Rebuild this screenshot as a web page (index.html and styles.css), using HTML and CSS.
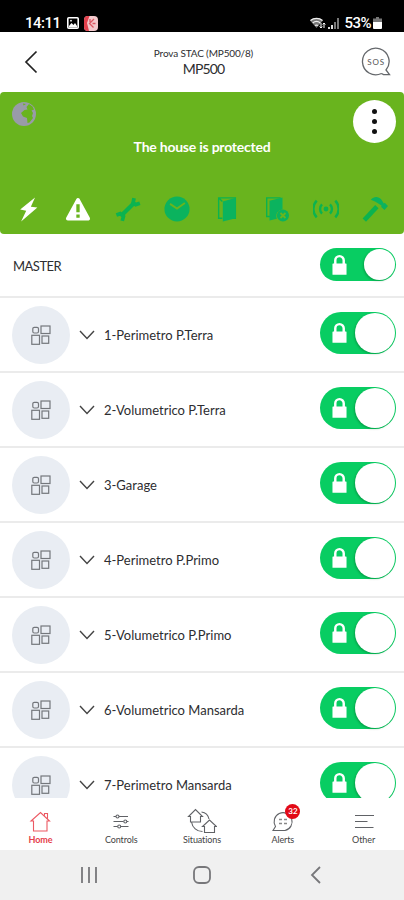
FILE: index.html
```html
<!DOCTYPE html>
<html lang="en">
<head>
  <meta charset="UTF-8" />
  <meta name="viewport" content="width=device-width, initial-scale=1.0"/>
  <title>MP500</title>
  <link rel="stylesheet" href="styles.css">
</head>
<body>

  <!-- shared icons -->
  <svg class="defs">
    <symbol id="lock" viewBox="0 0 16 22">
      <path d="M3.5 11V6a4.500 4.500 0 0 1 9 0V11" fill="none" stroke="#fff" stroke-width="2.6"/>
      <rect x="0.5" y="9.5" width="15" height="12" rx="0.5" fill="#fff"/>
    </symbol>
    <symbol id="area" viewBox="0 0 20 20">
      <g fill="none" stroke="#74777c" stroke-width="1.2">
        <rect x="1.8" y="2.300" width="5.700" height="5.700" rx="1.500"/>
        <rect x="10" y="1" width="9" height="7.5"/>
        <rect x="0.8" y="10.300" width="7.700" height="9"/>
        <rect x="11" y="11" width="6.700" height="7.300"/>
      </g>
    </symbol>
    <symbol id="down" viewBox="0 0 16 10">
      <path d="M1 1l7 7.5L15 1" fill="none" stroke="#444" stroke-width="1.4"/>
    </symbol>
  </svg>

  <div class="status">
    <span class="clock">14:11</span>
    <svg class="photo" width="12" height="12" viewBox="0 0 12 12">
      <rect x="0.8" y="0.8" width="10.4" height="10.4" rx="1" fill="none" stroke="#fff" stroke-width="1.6"/>
      <path d="M2 9l2.5-3 2 2 1.5-2L10 9v1.5H2z" fill="#fff"/>
      <circle cx="4" cy="3.7" r="0.9" fill="#fff"/>
    </svg>
    <svg width="14" height="15" viewBox="0 0 14 15">
      <rect width="14" height="15" rx="4" fill="#f3c9cc"/>
      <path d="M4 0h1.500L3 7l2 8H4a4 4 0 0 1-4-4V4a4 4 0 0 1 4-4z" fill="#e2414d"/>
      <path d="M10 3L5.500 7.500l4 4M8.500 7.500h3M6 3v3" stroke="#db5863" stroke-width="1.300" fill="none"/>
    </svg>
    <div class="status-right">
      <svg class="wifi" width="16" height="12" viewBox="0 0 16 12">
        <path d="M0 3.500a10 10 0 0 1 13 0L6.500 11z" fill="#777"/>
        <path d="M0.500 3.500a9.500 9.500 0 0 1 12 0M2.700 6a6 6 0 0 1 7.600 0M5 8.500a3 3 0 0 1 3 0" fill="none" stroke="#eee" stroke-width="1.300"/>
        <path d="M11 6v5M14 6v5M9.500 9.500L11 11l1.300-1.500M12.700 7.500L14 6l1.300 1.500" fill="none" stroke="#fff" stroke-width="1"/>
      </svg>
      <svg width="11" height="11" viewBox="0 0 11 11">
        <path d="M0 11v-2h2v2zM3 11V7h2v4z" fill="#ddd"/>
        <path d="M6 11V4h2v7zM9 11V0h2v11z" fill="#777"/>
      </svg>
      <span class="percent">53%</span>
      <svg class="battery" width="9" height="12" viewBox="0 0 9 12">
        <path d="M3 0h3v1.500h3V5H0V1.500h3z" fill="#777"/>
        <path d="M0 5h9v6a1 1 0 0 1-1 1H1a1 1 0 0 1-1-1z" fill="#fff"/>
      </svg>
    </div>
  </div>

  <header class="header">
    <svg class="back" width="14" height="24" viewBox="0 0 14 24">
      <path d="M12.500 1.500L2 12l10.500 10.500" fill="none" stroke="#222" stroke-width="1.700"/>
    </svg>
    <div class="title">
      <small>Prova STAC (MP500/8)</small>
      <span>MP500</span>
    </div>
    <svg class="sos" width="30" height="30" viewBox="0 0 30 30">
      <path d="M20.500 26.500A13.300 13.300 0 1 1 25 23L28.500 27.600H22.500L20.500 26.500" fill="none" stroke="#65686c" stroke-width="1.300"/>
      <text x="14.700" y="18" text-anchor="middle" textLength="17">SOS</text>
    </svg>
  </header>

  <section class="hero">
    <svg class="globe" width="26" height="26" viewBox="0 0 26 26">
      <circle cx="13" cy="13" r="12" fill="#999ba8"/>
      <path d="M10 12l3.500-3 3-.5-1-2.500 2.500-3 3.500 2.500 1.500 3-2.500 1 1.500 2.500-1 3 1 2-3.500 4.500-2 .5-.5-5-4-1.500z" fill="#69b41e"/>
      <path d="M12 2.500l3 .5-2.500 1.500z" fill="#69b41e"/>
    </svg>
    <div class="menu"><i></i><i></i><i></i></div>
    <div class="message">The house is protected</div>
    <div class="icons">
      <svg viewBox="0 0 28 28">
        <path d="M20.500 1.500L4.500 14.500l6.500 1.500L5.500 27.500 23 12.500l-7-1z" fill="#fff"/>
      </svg>
      <svg viewBox="0 0 28 28">
        <path d="M14 4.200L25 24.300H3z" fill="#fff" stroke="#fff" stroke-width="4" stroke-linejoin="round"/>
        <path d="M14 9v8.500M14 20v3.500" stroke="#69b41e" stroke-width="3.600"/>
      </svg>
      <svg viewBox="0 0 28 28">
        <path d="M8 20L20 8" stroke="#0bb350" stroke-width="4.500"/>
        <path d="M20.500 2.200l-1 4.800 2.800 2.300 4.500-1.500M1.500 20.500l4.200-1.500 3.400 3-1.300 4.800" fill="none" stroke="#0bb350" stroke-width="4"/>
      </svg>
      <svg viewBox="0 0 28 28">
        <circle cx="14" cy="14" r="13.500" fill="#0bb35e"/>
        <path d="M6.500 8.500l7.500 5 8.500-6" fill="none" stroke="#69b41e" stroke-width="2"/>
      </svg>
      <svg viewBox="0 0 28 28">
        <path d="M9 24H5V2h18v22h-4M5 2l4 4" fill="none" stroke="#0bb350" stroke-width="1.500"/>
        <path d="M9.500 6L23.500 2v22L9.500 27.500z" fill="#0bb35e"/>
      </svg>
      <svg viewBox="0 0 28 28">
        <path d="M8 22H4V2h15" fill="none" stroke="#0bb350" stroke-width="1.500"/>
        <path d="M7 5L21 1.500v13a7 7 0 0 0-6 10L7 26.500z" fill="#0bb35e"/>
        <circle cx="21.500" cy="21" r="6.500" fill="#0bb35e"/>
        <path d="M18.800 18.300l5.400 5.400M24.200 18.300l-5.400 5.400" stroke="#69b41e" stroke-width="2"/>
      </svg>
      <svg viewBox="0 0 28 28">
        <circle cx="14" cy="14" r="2.600" fill="#0bb350"/>
        <path d="M9.700 9a7 7 0 0 0 0 10M18.300 9a7 7 0 0 1 0 10M4 5a13 13 0 0 0 0 18M24 5a13 13 0 0 1 0 18" fill="none" stroke="#0bb350" stroke-width="2.600"/>
      </svg>
      <svg viewBox="0 0 28 28">
        <path d="M2.500 26L16 11.500" stroke="#0bb350" stroke-width="5"/>
        <path d="M9.500 4C13 0 18 .5 21 4l2.500 4 1-.8 3.500 3.500-3.800 4.300-3.500-3.200.3-1.500L14 6z" fill="#0bb35e"/>
      </svg>
    </div>
  </section>

  <main class="list">
    <div class="row master">
      <span class="name">MASTER</span>
      <div class="toggle"><svg><use href="#lock"/></svg><b></b></div>
    </div>
    <div class="row">
      <div class="circle"><svg><use href="#area"/></svg></div>
      <svg class="down"><use href="#down"/></svg>
      <span class="name">1-Perimetro P.Terra</span>
      <div class="toggle"><svg><use href="#lock"/></svg><b></b></div>
    </div>
    <div class="row">
      <div class="circle"><svg><use href="#area"/></svg></div>
      <svg class="down"><use href="#down"/></svg>
      <span class="name">2-Volumetrico P.Terra</span>
      <div class="toggle"><svg><use href="#lock"/></svg><b></b></div>
    </div>
    <div class="row">
      <div class="circle"><svg><use href="#area"/></svg></div>
      <svg class="down"><use href="#down"/></svg>
      <span class="name">3-Garage</span>
      <div class="toggle"><svg><use href="#lock"/></svg><b></b></div>
    </div>
    <div class="row">
      <div class="circle"><svg><use href="#area"/></svg></div>
      <svg class="down"><use href="#down"/></svg>
      <span class="name">4-Perimetro P.Primo</span>
      <div class="toggle"><svg><use href="#lock"/></svg><b></b></div>
    </div>
    <div class="row">
      <div class="circle"><svg><use href="#area"/></svg></div>
      <svg class="down"><use href="#down"/></svg>
      <span class="name">5-Volumetrico P.Primo</span>
      <div class="toggle"><svg><use href="#lock"/></svg><b></b></div>
    </div>
    <div class="row">
      <div class="circle"><svg><use href="#area"/></svg></div>
      <svg class="down"><use href="#down"/></svg>
      <span class="name">6-Volumetrico Mansarda</span>
      <div class="toggle"><svg><use href="#lock"/></svg><b></b></div>
    </div>
    <div class="row">
      <div class="circle"><svg><use href="#area"/></svg></div>
      <svg class="down"><use href="#down"/></svg>
      <span class="name">7-Perimetro Mansarda</span>
      <div class="toggle"><svg><use href="#lock"/></svg><b></b></div>
    </div>
  </main>

  <nav class="tabs">
    <div class="tab active">
      <svg viewBox="0 0 30 26">
        <path d="M8.500 13H6L15.500 4.500l9 8.500H22v10H8.500zM19.500 7.500V5.500h3v5" />
      </svg>
      <span>Home</span>
    </div>
    <div class="tab">
      <svg viewBox="0 0 30 26">
        <path d="M7.500 8.500h2.500M13 8.500h9M7.500 13.500h10M21 13.500h1.500M7.500 18.500h4M15 18.500h7.500"/>
        <circle cx="11.500" cy="8.500" r="1.500"/><circle cx="19.300" cy="13.500" r="1.500"/><circle cx="13.200" cy="18.500" r="1.500"/>
      </svg>
      <span>Controls</span>
    </div>
    <div class="tab">
      <svg viewBox="0 0 30 26">
        <path d="M3.500 14V8.500H1.500L8.500 1.500l7 7H13.500V14zM17.500 24.500v-6h-2l7-6.500 7 6.500H27.500v6zM14.500 4a9 9 0 0 1 7.500 7M4.500 14a11 11 0 0 0 11 9.500"/>
      </svg>
      <span>Situations</span>
    </div>
    <div class="tab">
      <svg viewBox="0 0 30 26">
        <path d="M5 22.500l2.500-4A9 9 0 1 1 17 22.500z"/>
        <path d="M11 11.500h3M16 11.500h3M11 15.500h3M16 15.500h3" stroke-width="1.600" stroke="#888"/>
      </svg>
      <em>32</em>
      <span>Alerts</span>
    </div>
    <div class="tab">
      <svg viewBox="0 0 30 26">
        <path d="M6 7.500h19M6 13.500h12.500M6 19.500h18.500"/>
      </svg>
      <span>Other</span>
    </div>
  </nav>

  <div class="system">
    <svg width="18" height="18" viewBox="0 0 18 18"><path d="M2 1v16M9 1v16M16 1v16"/></svg>
    <svg width="18" height="18" viewBox="0 0 18 18"><rect x="1" y="1" width="16" height="16" rx="5"/></svg>
    <svg width="18" height="18" viewBox="0 0 18 18"><path d="M13 1L5 9l8 8"/></svg>
  </div>

</body>
</html>
```
FILE: styles.css
```css
* {
  box-sizing: border-box;
}
body {
  margin: 0;
  width: 404px;
  height: 900px;
  overflow: hidden;
  display: flex;
  flex-direction: column;
  background: #fff;
  color: #2d2d30;
  font-family: Lato, sans-serif;
}
svg {
  display: block;
  flex: none;
}
.defs {
  position: absolute;
  width: 0;
  height: 0;
}
.status {
  height: 32px;
  flex: none;
  display: flex;
  align-items: center;
  padding: 14px 22px 0 25px;
  background: #000;
  color: #fff;
  font: 500 15px/18px Roboto, sans-serif;
}
.clock {
  width: 42px;
  letter-spacing: -0.5px;
}
.photo {
  margin-right: 5px;
}
.status-right {
  margin-left: auto;
  display: flex;
  align-items: center;
}
.wifi {
  margin-right: 2px;
}
.percent {
  margin: 0 2px 0 5px;
  letter-spacing: -0.5px;
}
.header {
  height: 60px;
  flex: none;
  display: flex;
  align-items: center;
  padding: 0 13px 0 24px;
}
.title {
  flex: 1;
  display: flex;
  flex-direction: column;
  align-items: center;
  padding: 0 0 1px 8px;
  font-size: 14px;
  line-height: 17px;
  letter-spacing: -0.9px;
}
.title small {
  font-size: 10px;
  line-height: 14px;
  letter-spacing: -0.15px;
}
.sos text {
  font: 8px Lato, sans-serif;
  fill: #555;
}
.hero {
  position: relative;
  height: 142px;
  flex: none;
  padding: 46px 4px 0;
  background: #69b41e;
  border-radius: 4px;
}
.globe {
  position: absolute;
  left: 11px;
  top: 9px;
}
.menu {
  position: absolute;
  right: 8px;
  top: 8px;
  width: 43px;
  height: 43px;
  border-radius: 50%;
  background: #fff;
  display: flex;
  flex-direction: column;
  align-items: center;
  justify-content: center;
  gap: 5px;
}
.menu i {
  width: 5px;
  height: 5px;
  border-radius: 50%;
  background: #111;
}
.message {
  text-align: center;
  color: #fff;
  font-size: 14px;
  line-height: 18px;
  font-weight: bold;
  letter-spacing: -0.23px;
}
.icons {
  display: flex;
  margin-top: 40px;
}
.icons svg {
  width: 26px;
  height: 26px;
  margin: 0 11.75px;
}
.list {
  flex: 1;
  min-height: 0;
  overflow: hidden;
}
.row {
  height: 75px;
  display: flex;
  align-items: center;
  padding: 0 8px 0 12px;
  border-bottom: 2px solid #ebebeb;
}
.master {
  height: 64px;
  padding-left: 13px;
}
.circle {
  width: 58px;
  height: 58px;
  border-radius: 50%;
  background: #e9edf3;
  display: flex;
  align-items: center;
  justify-content: center;
}
.circle svg {
  width: 20px;
  height: 20px;
}
.down {
  width: 16px;
  height: 10px;
  margin: 0 9px;
}
.name {
  font-size: 13px;
  white-space: nowrap;
}
.master .name {
  letter-spacing: -0.5px;
  padding-top: 2px;
}
.toggle {
  width: 76px;
  height: 42px;
  margin: 0 0 3px auto;
  border-radius: 21px;
  background: #08cd62;
  display: flex;
  align-items: center;
  justify-content: space-between;
  padding: 0 1px 0 12px;
}
.toggle svg {
  width: 15px;
  height: 22px;
}
.toggle b {
  width: 40px;
  height: 40px;
  border-radius: 50%;
  background: #fff;
  box-shadow: -1px 1px 2px rgba(0,70,20,0.3);
}
.master .toggle {
  height: 33px;
  margin-bottom: 1px;
}
.master .toggle b {
  width: 31px;
  height: 31px;
}
.tabs {
  height: 52px;
  flex: none;
  display: flex;
  background: #fff;
}
.tab {
  position: relative;
  flex: 1;
  display: flex;
  flex-direction: column;
  align-items: center;
  padding-top: 10px;
  font-size: 9px;
  line-height: 12px;
  color: #444;
}
.tab svg {
  width: 30px;
  height: 26px;
  fill: none;
  stroke: #606266;
  stroke-width: 1.1;
}
.tab span {
  letter-spacing: -0.1px;
}
.active {
  color: #e5404b;
  font-weight: bold;
}
.active svg {
  stroke: #ec5963;
}
.tab em {
  position: absolute;
  left: 43px;
  top: 6px;
  width: 15px;
  height: 15px;
  border-radius: 50%;
  background: #e20a17;
  color: #fff;
  font: bold 8px/15px Lato, sans-serif;
  text-align: center;
}
.system {
  height: 50px;
  flex: none;
  display: flex;
  align-items: center;
  justify-content: center;
  gap: 95.5px;
  background: #f0f0f0;
}
.system svg {
  fill: none;
  stroke: #77777a;
  stroke-width: 1.8;
}
```
